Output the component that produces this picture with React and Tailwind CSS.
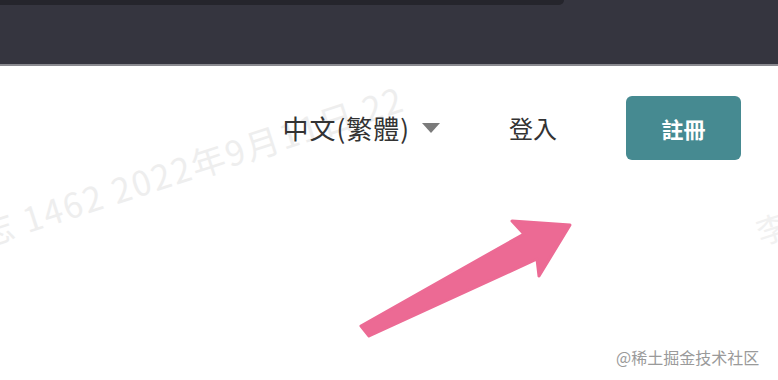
import React from "react";

const cjk = {fontFamily: '"Noto Sans CJK TC", "Noto Sans CJK SC", "Liberation Sans", sans-serif'};

function Watermark() {
    return (
        <div className="pointer-events-none absolute inset-0 overflow-hidden" style={cjk}>
            <div className="absolute left-[-20px] top-[208px] origin-left -rotate-[18deg] whitespace-nowrap text-[34px] tracking-[2px] text-[#eeeeee]">
                志 1462 2022年9月11日 22
            </div>
            <div className="absolute left-[756px] top-[203px] -rotate-[18deg] whitespace-nowrap text-[32px] text-[#f1f1f1]">
                李
            </div>
        </div>
    )
}

function Arrow() {
    return (
        <svg className="absolute left-0 top-0" width="778" height="380" viewBox="0 0 778 380">
            <path
                d="M361 326 L524 234 L512 221 L570 225 L539 276 L537 259 L369 336 Z"
                fill="#ec6a94"
                stroke="#ec6a94"
                strokeWidth="3"
                strokeLinejoin="round"
            />
        </svg>
    )
}

export default function App() {
    return (
        <div className="relative h-[380px] w-[778px] overflow-hidden bg-white" style={cjk}>
            <header className="h-[64px] bg-[#35353f]">
                <div className="h-[5px] w-[564px] rounded-br-lg bg-[#25252c]"/>
            </header>
            <div className="h-[2px] bg-[#8a8a90]"/>
            <Watermark/>
            <nav className="relative flex items-center justify-end pt-[30px] pr-[37px]">
                <button className="flex items-center text-[26px] leading-none tracking-[1px] text-[#333]">
                    中文(繁體)
                    <span className="ml-[12px] h-0 w-0 border-x-[9px] border-t-[10px] border-x-transparent border-t-[#7b7b7b]"/>
                </button>
                <a className="ml-[69px] text-[24px] leading-none text-[#333]">登入</a>
                <button className="ml-[69px] flex h-[64px] w-[115px] items-center justify-center rounded-md bg-[#468a91] text-[22px] font-bold text-white">
                    註冊
                </button>
            </nav>
            <Arrow/>
            <div className="absolute left-[616px] top-[345px] text-[16px] text-[#9a9a9a]">@稀土掘金技术社区</div>
        </div>
    )
}
